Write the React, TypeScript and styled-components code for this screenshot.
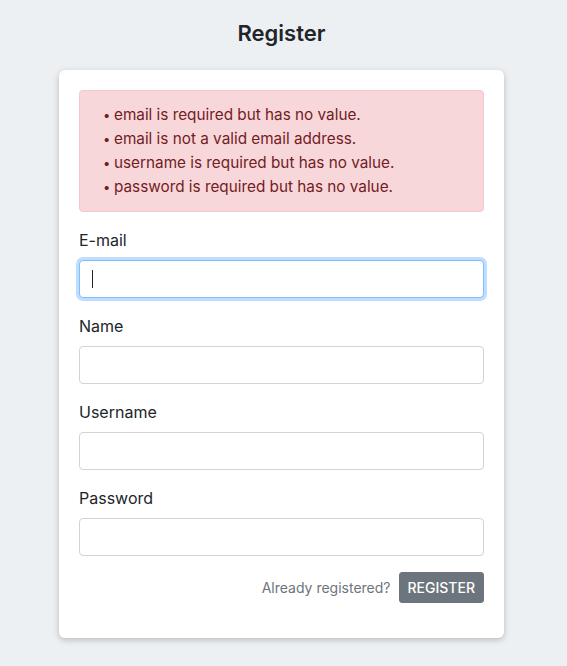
import styled, { createGlobalStyle } from 'styled-components'

const GlobalStyle = createGlobalStyle`
  * { box-sizing: border-box; }
  body {
    margin: 0;
    background: #edf0f3;
    font-family: Inter, "Noto Sans", sans-serif;
    color: #212529;
  }
`

const Page = styled.div`
  padding: 18px 4px 28px 0;
`

const Title = styled.h1`
  margin: 0 0 22px;
  text-align: center;
  font-size: 22px;
  line-height: 30px;
  font-weight: 600;
  color: #212529;
`

const Card = styled.form`
  width: 445px;
  margin: 0 auto;
  background: #fff;
  border-radius: 6px;
  box-shadow: 0 2px 6px rgba(0, 0, 0, 0.22);
  padding: 20px 20px 35px;
`

const Alert = styled.div`
  background: #f8d7da;
  border: 1px solid #f5c6cb;
  border-radius: 4px;
  color: #721c24;
  padding: 12px 20px;
  margin-bottom: 16px;

  ul {
    margin: 0;
    padding: 0;
    list-style: none;
  }

  li {
    font-size: 15.3px;
    line-height: 24px;
  }

  li::before {
    content: '•';
    display: inline-block;
    width: 11px;
    padding-left: 3px;
    font-size: 13px;
  }
`

const Group = styled.div`
  margin-bottom: 16px;
`

const Label = styled.label`
  display: block;
  font-size: 16px;
  line-height: 24px;
  margin-bottom: 8px;
`

const Field = styled.div`
  position: relative;
`

const Input = styled.input<{ $focused?: boolean }>`
  display: block;
  width: 100%;
  height: 38px;
  padding: 6px 12px;
  font: inherit;
  font-size: 16px;
  border-radius: 4px;
  border: 1px solid ${({ $focused }) => ($focused ? '#80bdff' : '#ced4da')};
  box-shadow: ${({ $focused }) => ($focused ? '0 0 0 3px rgba(0, 123, 255, 0.25)' : 'none')};
  outline: none;
  background: #fff;
`

const Caret = styled.span`
  position: absolute;
  left: 13px;
  top: 10px;
  width: 1px;
  height: 18px;
  background: #212529;
`

const Footer = styled.div`
  display: flex;
  justify-content: flex-end;
  align-items: center;
  gap: 8px;
`

const Muted = styled.span`
  color: #6c757d;
  font-size: 14px;
`

const Button = styled.button`
  background: #6c757d;
  color: #fff;
  border: 1px solid #6c757d;
  border-radius: 3px;
  font: inherit;
  font-size: 14px;
  font-weight: 500;
  line-height: 21px;
  padding: 4px 8px;
  text-transform: uppercase;
`

const errors = [
  'email is required but has no value.',
  'email is not a valid email address.',
  'username is required but has no value.',
  'password is required but has no value.',
]

const fields = ['E-mail', 'Name', 'Username', 'Password']

export default function App() {
  return (
    <>
      <GlobalStyle />
      <Page>
        <Title>Register</Title>
        <Card onSubmit={e => e.preventDefault()}>
          <Alert>
            <ul>
              {errors.map(err => (
                <li key={err}>{err}</li>
              ))}
            </ul>
          </Alert>
          {fields.map((f, i) => (
            <Group key={f}>
              <Label>{f}</Label>
              <Field>
                <Input $focused={i === 0} type={f === 'Password' ? 'password' : 'text'} />
                {i === 0 && <Caret />}
              </Field>
            </Group>
          ))}
          <Footer>
            <Muted>Already registered?</Muted>
            <Button type="submit">Register</Button>
          </Footer>
        </Card>
      </Page>
    </>
  )
}
